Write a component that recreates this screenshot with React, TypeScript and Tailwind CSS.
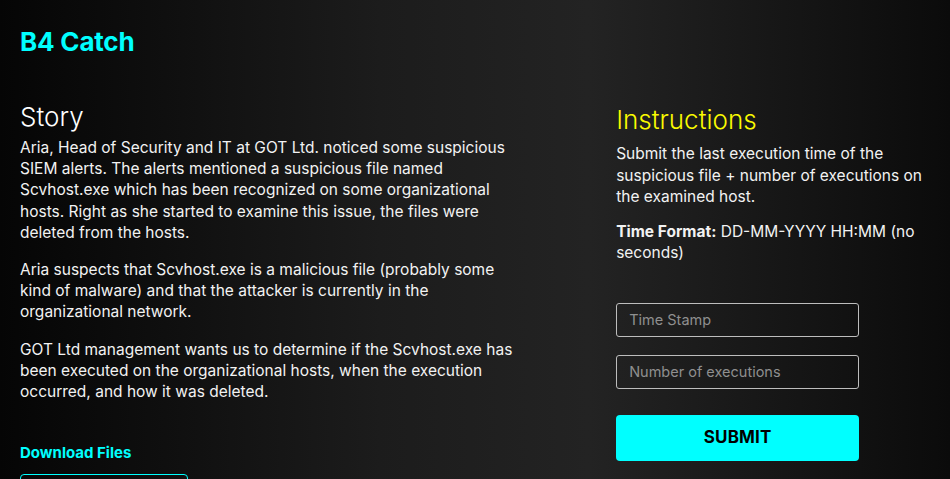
export default function App() {
  return (
    <div
      className="h-screen w-full bg-[linear-gradient(90deg,#050505_0%,#1c1c1c_40%,#232323_62%,#0b0b0b_100%)] text-white overflow-hidden"
      style={{ fontFamily: "Inter, 'Noto Sans', sans-serif" }}
    >
      <div className="px-5 pt-[26px]">
        {/* Header */}
        <h1 className="text-[26px] font-bold text-[#00ffff] leading-[32px] tracking-[-0.2px]">B4 Catch</h1>

        <div className="flex mt-[42px]">
          {/* Story */}
          <div className="w-[500px]">
            <h2 className="text-[26px] font-light leading-[34px] mb-[3px]">Story</h2>
            <div className="text-[15.5px] leading-[21.2px] text-[#f2f2f2] space-y-[16px]">
              <p>
                Aria, Head of Security and IT at GOT Ltd. noticed some suspicious SIEM alerts. The alerts mentioned a
                suspicious file named Scvhost.exe which has been recognized on some organizational hosts. Right as she
                started to examine this issue, the files were deleted from the hosts.
              </p>
              <p>
                Aria suspects that Scvhost.exe is a malicious file (probably some kind of malware) and that the attacker
                is currently in the organizational network.
              </p>
              <p>
                GOT Ltd management wants us to determine if the Scvhost.exe has been executed on the organizational
                hosts, when the execution occurred, and how it was deleted.
              </p>
            </div>
            <h3 className="mt-[41px] text-[15px] font-bold text-[#00ffff] leading-[20px]">Download Files</h3>
            <div className="mt-[11px] w-[168px] h-[40px] border border-[#00ffff] rounded-[4px]"></div>
          </div>

          {/* Instructions */}
          <div className="ml-[98px] w-[315px] pt-[3px]">
            <h2 className="text-[26px] font-light text-[#fafa00] leading-[34px] mb-[6px]">Instructions</h2>
            <p className="text-[15.5px] leading-[21.5px] text-[#f2f2f2]">
              Submit the last execution time of the suspicious file + number of executions on the examined host.
            </p>
            <p className="mt-[13px] text-[15.5px] leading-[21.5px] text-[#f2f2f2]">
              <span className="font-bold">Time Format:</span> DD-MM-YYYY HH:MM (no seconds)
            </p>

            <div className="w-[243px] mt-[39px] flex flex-col">
              <input
                placeholder="Time Stamp"
                className="h-[34px] px-3 bg-transparent border border-[#bdbdbd] rounded-[3px] text-[14.5px] text-white placeholder:text-[#8f8f8f] outline-none"
              />
              <input
                placeholder="Number of executions"
                className="mt-[18px] h-[34px] px-3 bg-transparent border border-[#bdbdbd] rounded-[3px] text-[14.5px] text-white placeholder:text-[#8f8f8f] outline-none"
              />
              <button className="mt-[26px] h-[46px] bg-[#00ffff] rounded-[4px] text-black font-bold text-[17px] tracking-[0.2px]">
                SUBMIT
              </button>
            </div>
          </div>
        </div>
      </div>
    </div>
  );
}
